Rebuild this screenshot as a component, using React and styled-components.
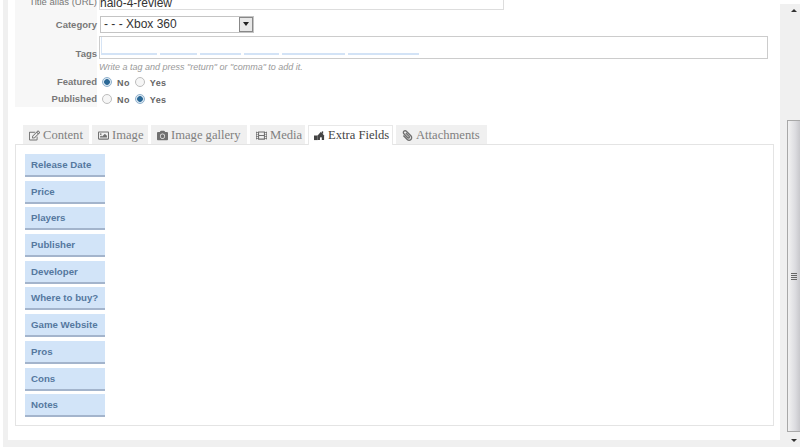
import React from 'react';
import styled, { createGlobalStyle } from 'styled-components';
import { FaRegEdit, FaRegImage, FaCamera, FaFilm, FaPaperclip } from 'react-icons/fa';

const GlobalStyle = createGlobalStyle`
  html, body {
    margin: 0;
    padding: 0;
    overflow: hidden;
    background: #fff;
  }
`;

const Page = styled.div`
  width: 800px;
  height: 447px;
  display: flex;
  overflow: hidden;
  background: #fff;
  font-family: 'Liberation Sans', Arial, sans-serif;
`;

const Frame = styled.div`
  flex: 1;
  min-width: 0;
  height: 440px;
  margin-left: 3px;
  padding: 0 7px;
  border-left: 5px solid #f0f0f0;
  border-bottom: 7px solid #f0f0f0;
  overflow: hidden;
`;

const Gutter = styled.div`
  width: 7px;
  flex: none;
  margin-top: 4px;
  background: #f0f0f0;
`;

const FormPanel = styled.div`
  width: 758px;
  margin-top: -8px;
  height: 115px;
  display: grid;
  grid-template-columns: 84px 1fr;
  grid-auto-rows: min-content;
  background: linear-gradient(to right, #f7f7f7 82px, #fff 82px);
`;

const Label = styled.div`
  box-sizing: border-box;
  font-size: 9.5px;
  font-weight: ${p => (p.$bold ? 700 : 400)};
  color: #777;
  padding: ${p => p.$pad || '0'};
  padding-right: 2px;
  height: ${p => p.$h}px;
  display: flex;
  align-items: ${p => p.$align || 'center'};
  justify-content: flex-end;
  white-space: nowrap;
`;

const Field = styled.div`
  box-sizing: border-box;
  height: ${p => p.$h}px;
  padding: ${p => p.$pad || '0'};
  display: flex;
  align-items: ${p => p.$align || 'center'};
`;

const AliasInput = styled.div`
  width: 405px;
  height: 18px;
  box-sizing: border-box;
  border: 1px solid #ddd;
  border-top: none;
  font-size: 12px;
  line-height: 22px;
  color: #333;
  overflow: hidden;
`;

const Select = styled.div`
  width: 154px;
  height: 17px;
  box-sizing: border-box;
  margin-left: 1px;
  border: 1px solid #c4c4c4;
  display: flex;
  justify-content: space-between;
  align-items: center;
  font-size: 12px;
  color: #333;
  padding-left: 3px;
  background: #fff;
`;

const SelectArrow = styled.span`
  width: 14px;
  height: 15px;
  box-sizing: border-box;
  border: 1px solid #888;
  background: #e8e8e8;
  display: flex;
  align-items: center;
  justify-content: center;
  &::after {
    content: '';
    border-left: 3px solid transparent;
    border-right: 3px solid transparent;
    border-top: 4px solid #222;
  }
`;

const TagsBox = styled.div`
  width: 669px;
  height: 23px;
  box-sizing: border-box;
  border: 1px solid #ccc;
  display: flex;
  gap: 3px;
  padding: 0 1px;
  background: #fff;
`;

const TagSlot = styled.span`
  width: ${p => p.$w}px;
  height: 16px;
  border-bottom: 2px solid #d3e3f6;
  border-left: ${p => (p.$first ? '1px solid #d6e4f5' : 'none')};
`;

const Hint = styled.div`
  font-size: 9px;
  font-style: italic;
  color: #999;
`;

const RadioRow = styled.div`
  display: flex;
  align-items: center;
  font-size: 9px;
  font-weight: 700;
  letter-spacing: 0.4px;
  color: #666;
  padding-left: 3px;
`;

const Radio = styled.span`
  width: 10px;
  height: 10px;
  box-sizing: border-box;
  border-radius: 50%;
  border: 1px solid ${p => (p.$on ? '#8fb0cc' : '#bdbdbd')};
  background: ${p => (p.$on ? 'radial-gradient(circle, #2a6896 0 2.5px, #dce8f2 3.2px)' : '#f6f6f6')};
  margin-right: 5px;
`;

const RadioText = styled.span`
  margin-right: ${p => (p.$gap ? 5 : 0)}px;
  position: relative;
  top: 1px;
`;

const Tabs = styled.div`
  display: flex;
  gap: 3px;
  width: 758px;
  margin-top: 17px;
  padding-left: 8px;
  box-sizing: border-box;
  height: 20px;
  align-items: flex-end;
`;

const Tab = styled.div`
  width: ${p => p.$w}px;
  flex: none;
  height: ${p => (p.$active ? 20 : 19)}px;
  box-sizing: border-box;
  display: flex;
  align-items: center;
  gap: 3px;
  padding-left: 5px;
  background: ${p => (p.$active ? '#fff' : '#f0f0f0')};
  border: 1px solid ${p => (p.$active ? '#e8e8e8' : '#f0f0f0')};
  border-bottom: none;
  margin-bottom: ${p => (p.$active ? -1 : 0)}px;
  position: relative;
  font-family: 'Liberation Serif', Georgia, serif;
  font-size: 12.6px;
  color: ${p => (p.$active ? '#444' : '#808080')};
  white-space: nowrap;
  svg {
    width: 11px;
    height: 11px;
    flex: none;
    color: ${p => (p.$active ? '#444' : '#707070')};
  }
`;

const TabBody = styled.div`
  width: 759px;
  height: 282px;
  box-sizing: border-box;
  border: 1px solid #e4e4e4;
  padding: 9px;
  display: flex;
  flex-direction: column;
  gap: 3.7px;
`;

const FieldButton = styled.div`
  width: 80px;
  height: 23px;
  box-sizing: border-box;
  flex: none;
  padding-left: 6px;
  display: flex;
  align-items: center;
  background: #d2e4f8;
  border-bottom: 2px solid #a3b4cc;
  font-size: 9.7px;
  font-weight: 700;
  color: #55789f;
`;

const Scrollbar = styled.div`
  width: 13px;
  flex: none;
  margin-top: 4px;
  display: flex;
  flex-direction: column;
  background: #f0f0f0;
`;

const ScrollArrow = styled.div`
  height: 13px;
  flex: none;
  display: flex;
  align-items: center;
  justify-content: center;
  &::after {
    content: '';
    border-left: 3px solid transparent;
    border-right: 3px solid transparent;
    ${p => (p.$up ? 'border-bottom: 3px solid #333;' : 'border-top: 3px solid #333;')}
  }
`;

const ScrollTrack = styled.div`
  flex: 1;
  padding-top: 103px;
  display: flex;
`;

const ScrollThumb = styled.div`
  flex: 1;
  height: 312px;
  box-sizing: border-box;
  border: 1px solid #a8a8a8;
  border-right: none;
  background: linear-gradient(to right, #f2f2f2, #dcdce0 60%, #c8c8cc);
  display: flex;
  align-items: center;
  justify-content: center;
`;

const Grip = styled.span`
  width: 6px;
  height: 7px;
  background: repeating-linear-gradient(to bottom, #666 0 1px, transparent 1px 2px);
`;

const ClipIcon = styled(FaPaperclip)`
  transform: scaleX(-1);
`;

// small house-and-shed glyph used on the Extra Fields tab
const ExtraIcon = () => (
  <svg viewBox="0 0 12 12" fill="currentColor">
    <path d="M0 6h4v5H0z" />
    <path d="M4 6l3.5-4L11 6v5H4z" />
    <path d="M8.5 1.5H10V4H8.5z" />
    <path d="M6.5 8h2v3h-2z" fill="#fff" />
  </svg>
);

const tabs = [
  { label: 'Content', Icon: FaRegEdit, w: 66 },
  { label: 'Image', Icon: FaRegImage, w: 56 },
  { label: 'Image gallery', Icon: FaCamera, w: 96 },
  { label: 'Media', Icon: FaFilm, w: 55 },
  { label: 'Extra Fields', Icon: ExtraIcon, w: 85, active: true },
  { label: 'Attachments', Icon: ClipIcon, w: 91 },
];

const fields = [
  'Release Date',
  'Price',
  'Players',
  'Publisher',
  'Developer',
  'Where to buy?',
  'Game Website',
  'Pros',
  'Cons',
  'Notes',
];

const tagSlots = [55, 37, 41, 35, 63, 71];

export default function App() {
  return (
    <Page>
      <GlobalStyle />
      <Frame>
        <FormPanel>
          <Label $h={18} $align="flex-end" $pad="0 0 3px">Title alias (URL)</Label>
          <Field $h={18} $align="flex-end">
            <AliasInput>halo-4-review</AliasInput>
          </Field>
          <Label $h={26} $bold $pad="6px 0 4px">Category</Label>
          <Field $h={26} $pad="6px 0 4px">
            <Select>
              - - - Xbox 360
              <SelectArrow />
            </Select>
          </Field>
          <Label $h={24} $bold $align="flex-end" $pad="0 0 1px">Tags</Label>
          <Field $h={24} $align="flex-start">
            <TagsBox>
              {tagSlots.map((w, i) => (
                <TagSlot key={i} $w={w} $first={i === 0} />
              ))}
            </TagsBox>
          </Field>
          <Label $h={14} />
          <Field $h={14}>
            <Hint>Write a tag and press "return" or "comma" to add it.</Hint>
          </Field>
          <Label $h={16} $bold $pad="0 0 1px">Featured</Label>
          <Field $h={16}>
            <RadioRow>
              <Radio $on />
              <RadioText $gap>No</RadioText>
              <Radio />
              <RadioText>Yes</RadioText>
            </RadioRow>
          </Field>
          <Label $h={17} $bold $pad="0 0 1px">Published</Label>
          <Field $h={17}>
            <RadioRow>
              <Radio />
              <RadioText $gap>No</RadioText>
              <Radio $on />
              <RadioText>Yes</RadioText>
            </RadioRow>
          </Field>
        </FormPanel>
        <Tabs>
          {tabs.map(({ label, Icon, w, active }) => (
            <Tab key={label} $w={w} $active={active}>
              <Icon />
              {label}
            </Tab>
          ))}
        </Tabs>
        <TabBody>
          {fields.map(name => (
            <FieldButton key={name}>{name}</FieldButton>
          ))}
        </TabBody>
      </Frame>
      <Gutter />
      <Scrollbar>
        <ScrollArrow $up />
        <ScrollTrack>
          <ScrollThumb>
            <Grip />
          </ScrollThumb>
        </ScrollTrack>
        <ScrollArrow />
      </Scrollbar>
    </Page>
  );
}
